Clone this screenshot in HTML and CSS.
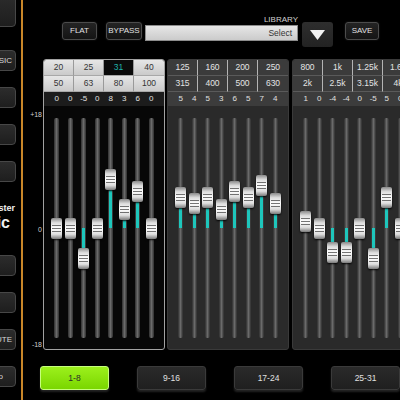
FILE: index.html
```html
<!DOCTYPE html>
<html lang="en">
<head>
    <meta charset="UTF-8">
    <meta name="viewport" content="width=device-width, initial-scale=1.0">
    <title>Graphic EQ</title>
    <link rel="stylesheet" href="styles.css">
</head>
<body>
    <div class="app">
        <aside class="sidebar">
            <div class="side-btn side-btn-first"></div>
            <div class="side-btn side-btn-second">MUSIC</div>
            <div class="side-btn"></div>
            <div class="side-btn"></div>
            <div class="side-btn"></div>
            <div class="side-title">
                <div class="side-title-small">Master</div>
                <div class="side-title-big">Graphic</div>
            </div>
            <div class="side-btn"></div>
            <div class="side-btn"></div>
            <div class="side-btn">MUTE</div>
            <div class="side-btn side-btn-info">Info</div>
        </aside>

        <main class="main">
            <div class="topbar">
                <button class="top-btn flat">FLAT</button>
                <button class="top-btn bypass">BYPASS</button>
                <div class="library">
                    <div class="library-label">LIBRARY</div>
                    <div class="library-box">Select</div>
                </div>
                <button class="dropdown">
                    <svg width="15" height="10" viewBox="0 0 15 10"><polygon points="0,0 15,0 7.5,10" fill="#f2f2f2"/></svg>
                </button>
                <button class="top-btn save">SAVE</button>
            </div>

            <div class="eq">
                <div class="scale">
                    <span>+18</span>
                    <span>0</span>
                    <span>-18</span>
                </div>
                <div class="section section-active" id="section-1"></div>
                <div class="section" id="section-2"></div>
                <div class="section section-last" id="section-3"></div>
            </div>

            <div class="banks">
                <button class="bank bank-active">1-8</button>
                <button class="bank">9-16</button>
                <button class="bank">17-24</button>
                <button class="bank">25-31</button>
            </div>
        </main>
    </div>

    <script>
        const sections = [
            { id: 'section-1', bands: ['20', '25', '31', '40', '50', '63', '80', '100'], gains: [0, 0, -5, 0, 8, 3, 6, 0], selected: 2 },
            { id: 'section-2', bands: ['125', '160', '200', '250', '315', '400', '500', '630'], gains: [5, 4, 5, 3, 6, 5, 7, 4], selected: -1 },
            { id: 'section-3', bands: ['800', '1k', '1.25k', '1.6k', '2k', '2.5k', '3.15k', '4k'], gains: [1, 0, -4, -4, 0, -5, 5, 0], selected: -1 }
        ];

        const ZERO = 122;     // position du 0 dB dans la zone des faders
        const STEP = 6.1;     // pixels par dB
        const KNOB = 10.5;    // demi-hauteur du bouton

        function buildSection(section) {
            const el = document.getElementById(section.id);

            // Grille des fréquences
            const bands = document.createElement('div');
            bands.className = 'bands';
            section.bands.forEach((band, index) => {
                const cell = document.createElement('div');
                cell.className = 'band' + (index === section.selected ? ' band-selected' : '');
                cell.textContent = band;
                bands.appendChild(cell);
            });
            el.appendChild(bands);

            // Valeurs de gain
            const values = document.createElement('div');
            values.className = 'values';
            section.gains.forEach(gain => {
                const value = document.createElement('span');
                value.textContent = gain;
                values.appendChild(value);
            });
            el.appendChild(values);

            // Faders
            const faders = document.createElement('div');
            faders.className = 'faders';
            section.gains.forEach(gain => {
                const fader = document.createElement('div');
                fader.className = 'fader';
                const center = ZERO - gain * STEP;
                let level = '';
                if (gain > 0 && center + KNOB < ZERO) {
                    level = `<div class="level" style="top:${center + KNOB}px;height:${ZERO - center - KNOB}px"></div>`;
                } else if (gain < 0 && center - KNOB > ZERO) {
                    level = `<div class="level" style="top:${ZERO}px;height:${center - KNOB - ZERO}px"></div>`;
                }
                fader.innerHTML = `
                    <div class="track"></div>
                    ${level}
                    <div class="knob" style="top:${center - KNOB}px"></div>
                `;
                faders.appendChild(fader);
            });
            el.appendChild(faders);
        }

        sections.forEach(buildSection);
    </script>
</body>
</html>
```

FILE: styles.css
```css
body {
    margin: 0;
    background-color: #000;
    font-family: "Liberation Sans", Arial, sans-serif;
    width: 400px;
    height: 400px;
    overflow: hidden;
}

button {
    font-family: inherit;
    padding: 0;
    cursor: pointer;
}

.app {
    display: flex;
    height: 400px;
}

/* Colonne de gauche */
.sidebar {
    width: 21px;
    flex-shrink: 0;
    border-right: 2px solid #c98629;
    overflow: hidden;
    display: flex;
    flex-direction: column;
}

.side-btn {
    width: 44px;
    height: 21px;
    margin-left: -28px;
    margin-top: 16px;
    flex-shrink: 0;
    box-sizing: border-box;
    background: linear-gradient(#2c2c2c, #1e1e1e);
    border: 1px solid #474747;
    border-radius: 4px;
    color: #d8d8d8;
    font-size: 8px;
    line-height: 19px;
    text-align: right;
    padding-right: 3px;
}

.side-btn-first {
    height: 33px;
    margin-top: -6px;
}

.side-btn-second {
    margin-top: 23px;
}

.side-btn-info {
    padding-right: 12px;
}

.side-title {
    width: 100px;
    margin-left: -84px;
    margin-top: 20px;
    margin-bottom: 7px;
    flex-shrink: 0;
    text-align: right;
    color: #f0f0f0;
    white-space: nowrap;
}

.side-title-small {
    font-size: 9px;
    font-weight: bold;
    line-height: 12px;
    padding-right: 1px;
}

.side-title-big {
    font-size: 16px;
    font-weight: bold;
    line-height: 18px;
    padding-right: 6px;
}

/* Zone principale */
.main {
    flex: 1;
    min-width: 0;
    overflow: hidden;
}

.topbar {
    display: flex;
    align-items: flex-start;
    height: 59px;
    box-sizing: border-box;
    padding-top: 22px;
}

.top-btn {
    height: 18px;
    box-sizing: border-box;
    background: linear-gradient(#242424, #141414);
    border: 1px solid #4c4c4c;
    border-radius: 3px;
    box-shadow: 0 0 2px rgba(255, 255, 255, 0.12), 0 1px 2px rgba(0, 0, 0, 0.9);
    color: #e2e2e2;
    font-size: 8px;
    line-height: 16px;
    text-align: center;
}

.flat {
    margin-left: 39px;
    width: 35px;
}

.bypass {
    margin-left: 9px;
    width: 36px;
}

.library {
    margin-left: 3px;
    margin-top: -8px;
    width: 153px;
}

.library-label {
    height: 11px;
    line-height: 11px;
    font-size: 8px;
    color: #d0d0d0;
    text-align: right;
}

.library-box {
    height: 16px;
    box-sizing: border-box;
    background: linear-gradient(#e6e6e6, #cbcbcb);
    border: 1px solid #8c8c8c;
    color: #333;
    font-size: 8.5px;
    line-height: 14px;
    text-align: right;
    padding-right: 5px;
}

.dropdown {
    margin-left: 4px;
    width: 31px;
    height: 25px;
    background: linear-gradient(#2e2e2e, #222);
    border: none;
    border-radius: 3px;
    display: flex;
    align-items: center;
    justify-content: center;
}

.save {
    margin-left: 12px;
    width: 34px;
}

/* Égaliseur */
.eq {
    display: flex;
    height: 291px;
}

.scale {
    width: 20px;
    flex-shrink: 0;
    display: flex;
    flex-direction: column;
    justify-content: space-between;
    box-sizing: border-box;
    padding-top: 51px;
    padding-right: 1px;
    color: #cfcfcf;
    font-size: 7px;
    line-height: 10px;
    text-align: right;
}

.section {
    width: 122px;
    flex-shrink: 0;
    box-sizing: border-box;
    border: 1px solid #3a3a3a;
    border-radius: 3px;
    background-color: #2a2a2a;
    display: flex;
    flex-direction: column;
    overflow: hidden;
}

.section + .section {
    margin-left: 2px;
}

.section-last {
    margin-left: 3px !important;
}

.section-active {
    border-color: #a2a2a2;
    background-color: #070707;
}

.bands {
    display: grid;
    grid-template-columns: repeat(4, 1fr);
    grid-auto-rows: 16px;
}

.band {
    box-sizing: border-box;
    background: #3b3b3b;
    border-right: 1px solid #b4b4b4;
    border-bottom: 1px solid #5a5a5a;
    color: #e4e4e4;
    font-size: 8.5px;
    line-height: 15px;
    text-align: center;
}

.band:nth-child(4n) {
    border-right: none;
}

.section-active .band {
    background: linear-gradient(#e6e6e6, #cacaca);
    border-right-color: #9a9a9a;
    border-bottom-color: #a8a8a8;
    color: #333;
}

.section-active .band-selected {
    background: #0b0b0b;
    color: #1fb3aa;
}

.values {
    display: flex;
    height: 14px;
    padding: 0 6px;
    background-color: #3c3c3c;
    color: #e0e0e0;
    font-size: 8px;
    line-height: 14px;
}

.section-active .values {
    background-color: #1c1c1c;
}

.values span {
    flex: 1;
    text-align: center;
}

.faders {
    flex: 1;
    display: flex;
    padding: 0 6px;
}

.fader {
    flex: 1;
    position: relative;
}

.track {
    width: 5px;
    height: 220px;
    margin: 12px auto 0;
    border-radius: 2px;
    background: linear-gradient(to right, #2e2e2e, #6a6a6a 50%, #2e2e2e);
}

.level {
    position: absolute;
    left: 50%;
    width: 3px;
    margin-left: -1.5px;
    background-color: #1ec6bc;
}

.knob {
    position: absolute;
    left: 50%;
    width: 11px;
    height: 21px;
    margin-left: -5.5px;
    border-radius: 2px;
    background: linear-gradient(#8a8a8a, #dcdcdc 22%, #ffffff 50%, #dcdcdc 78%, #7a7a7a);
    box-shadow: 0 1px 2px rgba(0, 0, 0, 0.9);
}

.knob::after {
    content: '';
    position: absolute;
    left: 1px;
    right: 1px;
    top: 5px;
    bottom: 5px;
    background: repeating-linear-gradient(to bottom, transparent 0 2px, rgba(70, 70, 70, 0.75) 2px 3px);
}

/* Banques */
.banks {
    display: flex;
    gap: 28px;
    margin-top: 16px;
    margin-left: 17px;
}

.bank {
    width: 69px;
    height: 24px;
    flex-shrink: 0;
    box-sizing: border-box;
    background: linear-gradient(#2a2a2a, #1f1f1f);
    border: 1px solid #3a3a3a;
    border-radius: 3px;
    box-shadow: 0 2px 2px rgba(70, 70, 70, 0.5);
    color: #e0e0e0;
    font-size: 8.5px;
}

.bank-active {
    background: linear-gradient(#9cf01c, #7ad600);
    border-color: #c6ff7c;
    color: #2a2a2a;
}
```
